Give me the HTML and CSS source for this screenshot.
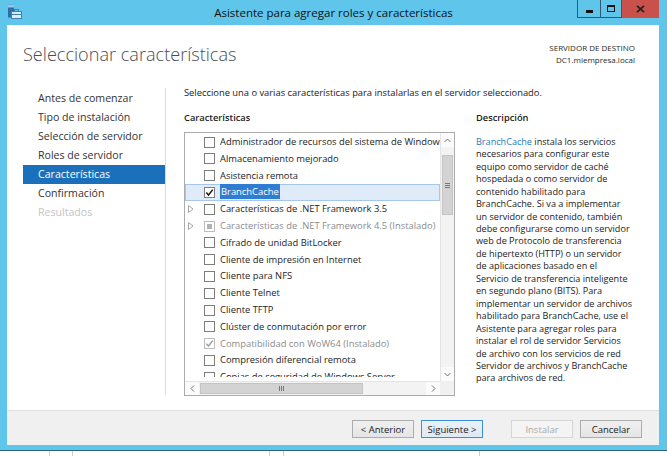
FILE: index.html
```html
<!DOCTYPE html>
<html lang="es">
<head>
<meta charset="utf-8">
<title>Asistente para agregar roles y características</title>
<link rel="stylesheet" href="styles.css">
</head>
<body>
<div class="window">
  <div class="titlebar">
    <div class="tb-left">
      <svg class="app-icon" width="16" height="16" viewBox="0 0 16 16">
        <rect x="1" y="0.5" width="6" height="13" fill="#2d6fa8"/>
        <rect x="1" y="0.5" width="6" height="3" fill="#8fc9ec"/>
        <rect x="4.5" y="7.5" width="10" height="7" fill="#d9eef9" stroke="#3f7fb3" stroke-width="1"/>
        <rect x="7.5" y="5.5" width="4" height="2" fill="none" stroke="#3f7fb3" stroke-width="1"/>
        <rect x="5" y="10" width="9" height="1" fill="#3f7fb3"/>
      </svg>
    </div>
    <div class="title">Asistente para agregar roles y características</div>
    <div class="controls">
      <div class="ctl ctl-min"><span class="min-glyph"></span></div>
      <div class="ctl ctl-max"><span class="max-glyph"></span></div>
      <div class="ctl ctl-close">
        <svg width="9" height="8" viewBox="0 0 9 8"><path d="M1 0.8 L8 7.2 M8 0.8 L1 7.2" stroke="#222" stroke-width="1.8" fill="none"/></svg>
      </div>
    </div>
  </div>

  <div class="client">
    <div class="header">
      <h1>Seleccionar características</h1>
      <div class="dest">
        <div>SERVIDOR DE DESTINO</div>
        <div>DC1.miempresa.local</div>
      </div>
    </div>

    <div class="main">
      <nav class="steps">
        <div class="step">Antes de comenzar</div>
        <div class="step">Tipo de instalación</div>
        <div class="step">Selección de servidor</div>
        <div class="step">Roles de servidor</div>
        <div class="step active">Características</div>
        <div class="step">Confirmación</div>
        <div class="step disabled">Resultados</div>
      </nav>

      <div class="content">
        <p class="intro">Seleccione una o varias características para instalarlas en el servidor seleccionado.</p>
        <div class="columns">
          <div class="features">
            <div class="label">Características</div>
            <div class="listbox">
              <div class="rows">
                <div class="row"><span class="exp"></span><span class="cb"></span><span class="txt">Administrador de recursos del sistema de Windows</span></div>
                <div class="row"><span class="exp"></span><span class="cb"></span><span class="txt">Almacenamiento mejorado</span></div>
                <div class="row"><span class="exp"></span><span class="cb"></span><span class="txt">Asistencia remota</span></div>
                <div class="row selected"><span class="exp"></span><span class="cb"><svg width="9" height="9" viewBox="0 0 9 9"><polyline points="1.3,4.6 3.5,7 7.8,1.6" fill="none" stroke="#1a1a1a" stroke-width="1.5"/></svg></span><span class="txt"><span class="hl">BranchCache</span></span></div>
                <div class="row"><span class="exp"><svg width="6" height="8" viewBox="0 0 6 8"><polygon points="0.5,0.5 5,4 0.5,7.5" fill="none" stroke="#a6a6a6" stroke-width="1"/></svg></span><span class="cb"></span><span class="txt">Características de .NET Framework 3.5</span></div>
                <div class="row installed"><span class="exp"><svg width="6" height="8" viewBox="0 0 6 8"><polygon points="0.5,0.5 5,4 0.5,7.5" fill="none" stroke="#a6a6a6" stroke-width="1"/></svg></span><span class="cb partial"><span class="fill"></span></span><span class="txt">Características de .NET Framework 4.5 (Instalado)</span></div>
                <div class="row"><span class="exp"></span><span class="cb"></span><span class="txt">Cifrado de unidad BitLocker</span></div>
                <div class="row"><span class="exp"></span><span class="cb"></span><span class="txt">Cliente de impresión en Internet</span></div>
                <div class="row"><span class="exp"></span><span class="cb"></span><span class="txt">Cliente para NFS</span></div>
                <div class="row"><span class="exp"></span><span class="cb"></span><span class="txt">Cliente Telnet</span></div>
                <div class="row"><span class="exp"></span><span class="cb"></span><span class="txt">Cliente TFTP</span></div>
                <div class="row"><span class="exp"></span><span class="cb"></span><span class="txt">Clúster de conmutación por error</span></div>
                <div class="row installed"><span class="exp"></span><span class="cb"><svg width="9" height="9" viewBox="0 0 9 9"><polyline points="1.3,4.6 3.5,7 7.8,1.6" fill="none" stroke="#9a9a9a" stroke-width="1.4"/></svg></span><span class="txt">Compatibilidad con WoW64 (Instalado)</span></div>
                <div class="row"><span class="exp"></span><span class="cb"></span><span class="txt">Compresión diferencial remota</span></div>
                <div class="row"><span class="exp"></span><span class="cb"></span><span class="txt">Copias de seguridad de Windows Server</span></div>
              </div>
              <div class="vscroll">
                <div class="sbtn"><svg width="7" height="5" viewBox="0 0 7 5"><polyline points="0.5,4 3.5,1 6.5,4" fill="none" stroke="#707070" stroke-width="1"/></svg></div>
                <div class="vgap"></div>
                <div class="vthumb"><span class="grip-h"></span><span class="grip-h"></span><span class="grip-h"></span></div>
                <div class="vtrack"></div>
                <div class="sbtn"><svg width="7" height="5" viewBox="0 0 7 5"><polyline points="0.5,1 3.5,4 6.5,1" fill="none" stroke="#707070" stroke-width="1"/></svg></div>
              </div>
              <div class="hscroll">
                <div class="sbtn"><svg width="5" height="7" viewBox="0 0 5 7"><polyline points="4,0.5 1,3.5 4,6.5" fill="none" stroke="#707070" stroke-width="1"/></svg></div>
                <div class="hthumb"><span class="grip-v"></span><span class="grip-v"></span><span class="grip-v"></span></div>
                <div class="htrack"></div>
                <div class="sbtn"><svg width="5" height="7" viewBox="0 0 5 7"><polyline points="1,0.5 4,3.5 1,6.5" fill="none" stroke="#707070" stroke-width="1"/></svg></div>
              </div>
              <div class="corner"></div>
            </div>
          </div>

          <div class="desc">
            <div class="label">Descripción</div>
            <p class="desc-text"><span class="link">BranchCache</span> instala los servicios<br>necesarios para configurar este<br>equipo como servidor de caché<br>hospedada o como servidor de<br>contenido habilitado para<br>BranchCache. Si va a implementar<br>un servidor de contenido, también<br>debe configurarse como un servidor<br>web de Protocolo de transferencia<br>de hipertexto (HTTP) o un servidor<br>de aplicaciones basado en el<br>Servicio de transferencia inteligente<br>en segundo plano (BITS). Para<br>implementar un servidor de archivos<br>habilitado para BranchCache, use el<br>Asistente para agregar roles para<br>instalar el rol de servidor Servicios<br>de archivo con los servicios de red<br>Servidor de archivos y BranchCache<br>para archivos de red.</p>
          </div>
        </div>
      </div>
    </div>

    <div class="footer">
      <button class="btn">&lt; Anterior</button>
      <button class="btn primary">Siguiente &gt;</button>
      <button class="btn disabled gap-left">Instalar</button>
      <button class="btn">Cancelar</button>
    </div>
  </div>
</div>
<div class="backdrop">
  <div class="seg s1"></div><div class="seg s2"></div><div class="seg s3"></div><div class="seg s4"></div><div class="seg s5"></div><div class="seg s6"></div>
</div>
</body>
</html>
```

FILE: styles.css
```css
* { box-sizing: border-box; }
html, body { margin: 0; padding: 0; }
body {
  width: 667px;
  height: 456px;
  overflow: hidden;
  background: #ffffff;
  font-family: "Open Sans", "Noto Sans", "Liberation Sans", sans-serif;
  color: #1e1e1e;
}

.window {
  height: 451px;
  background: #5fc5ea;
  border-bottom: 1px solid #2f6580;
  padding-bottom: 5px;
  display: flex;
  flex-direction: column;
}

/* title bar */
.titlebar {
  height: 25px;
  display: grid;
  grid-template-columns: 1fr auto 1fr;
  align-items: start;
}
.tb-left { padding: 4px 0 0 7px; }
.app-icon { display: block; }
.title {
  font-size: 11.5px;
  line-height: 25px;
  color: #111;
  white-space: nowrap;
}
.controls {
  display: flex;
  justify-content: flex-end;
  padding-right: 8px;
}
.ctl {
  height: 18px;
  display: flex;
  align-items: center;
  justify-content: center;
}
.ctl-min {
  width: 23px;
  border: 1px solid #2e5a72;
  border-top: none;
  border-right: none;
}
.ctl-max {
  width: 22px;
  border: 1px solid #2e5a72;
  border-top: none;
}
.ctl-close {
  width: 37px;
  background: #c8514b;
}
.min-glyph {
  display: block;
  width: 7px;
  height: 3px;
  background: #111;
  margin-top: 5px;
}
.max-glyph {
  display: block;
  width: 8px;
  height: 7px;
  border: 1px solid #111;
  border-top-width: 2px;
}

/* client area */
.client {
  flex: 1;
  margin: 0 8px 0 7px;
  background: #ffffff;
  display: flex;
  flex-direction: column;
}

.header {
  height: 61px;
  display: flex;
  justify-content: space-between;
  align-items: flex-start;
  padding: 17px 24px 0 16px;
}
.header h1 {
  margin: 0;
  font-size: 18.1px;
  font-weight: 300;
  line-height: 25px;
  color: #4a4d55;
}
.dest {
  text-align: right;
  font-size: 8px;
  line-height: 12px;
  color: #2a2a2a;
}

.main {
  flex: 1;
  display: flex;
}

.steps {
  margin: 2px 0 0 16px;
  width: 143px;
  height: 307px;
  border-right: 1px solid #dcdcdc;
  padding-top: 1px;
}
.step {
  height: 19px;
  line-height: 19px;
  padding-left: 15px;
  font-size: 10.6px;
  color: #333;
  white-space: nowrap;
}
.step.active {
  background: #1a70bb;
  color: #fff;
}
.step.disabled { color: #c4c4c4; }

.content {
  margin-left: 18px;
  flex: 1;
}
.intro {
  margin: 0;
  font-size: 9.35px;
  line-height: 14px;
  color: #222;
  white-space: nowrap;
}
.columns {
  display: flex;
  margin-top: 11px;
  gap: 21px;
}
.label {
  font-size: 9.3px;
  font-weight: 600;
  line-height: 14px;
  color: #222;
}
.features { width: 271px; }

.listbox {
  margin-top: 7px;
  height: 264px;
  border: 1px solid #acacac;
  background: #fff;
  display: grid;
  grid-template-columns: 255px 14px;
  grid-template-rows: 248px 14px;
}
.rows {
  height: 244px;
  align-self: start;
  overflow: hidden;
  padding-top: 0.7px;
}
.row {
  height: 16.8px;
  display: flex;
  align-items: center;
  font-size: 9.4px;
  color: #1e1e1e;
  white-space: nowrap;
  border: 1px solid transparent;
}
.row.selected {
  background: #dfebf9;
  border-color: #a6c6ea;
}
.exp {
  width: 18px;
  flex: none;
  padding-left: 2px;
  display: flex;
  align-items: center;
}
.exp svg { display: block; }
.cb {
  width: 11px;
  height: 11px;
  flex: none;
  border: 1px solid #7d7d7d;
  background: #fff;
  display: flex;
  align-items: center;
  justify-content: center;
}
.cb svg { display: block; }
.txt {
  margin-left: 5px;
  line-height: 14px;
}
.hl {
  background: #2f7dd3;
  color: #fff;
  padding: 1px 1px;
}
.row.installed { color: #8c8c8c; }
.row.installed .cb { border-color: #bdbdbd; }
.cb.partial .fill {
  display: block;
  width: 5px;
  height: 5px;
  background: #b3b3b3;
}

.vscroll {
  background: #f3f3f3;
  border-left: 1px solid #e4e4e4;
  display: flex;
  flex-direction: column;
}
.sbtn {
  width: 13px;
  height: 14px;
  flex: none;
  display: flex;
  align-items: center;
  justify-content: center;
  background: #fbfbfb;
}
.hscroll .sbtn { width: 14px; height: 13px; }
.sbtn svg { display: block; }
.vgap { height: 8px; flex: none; }
.vthumb {
  height: 60px;
  flex: none;
  margin: 0 1px;
  background: #d3d3d3;
  border: 1px solid #c4c4c4;
  display: flex;
  flex-direction: column;
  align-items: center;
  justify-content: center;
  gap: 1px;
}
.grip-h { display: block; width: 5px; height: 1px; background: #777; }
.vtrack { flex: 1; }

.hscroll {
  background: #f3f3f3;
  border-top: 1px solid #e4e4e4;
  display: flex;
}
.hthumb {
  width: 163px;
  flex: none;
  margin: 1px 0 1px 1px;
  background: #d3d3d3;
  border: 1px solid #c4c4c4;
  display: flex;
  align-items: center;
  justify-content: center;
  gap: 1px;
}
.grip-v { display: block; width: 1px; height: 5px; background: #777; }
.htrack { flex: 1; }
.corner { background: #f0f0f0; }

.desc { width: 170px; }
.desc-text {
  margin: 10.8px 0 0;
  font-size: 9.1px;
  line-height: 12.45px;
  color: #222;
  white-space: nowrap;
}
.link { color: #1b7bbd; }

/* footer */
.footer {
  height: 35px;
  border-top: 1px solid #dfdfdf;
  background: #f0f0f0;
  display: flex;
  justify-content: flex-end;
  align-items: flex-start;
  padding: 9px 17px 0 0;
  gap: 7px;
}
.btn {
  width: 62px;
  height: 18px;
  padding: 0;
  font-family: inherit;
  font-size: 9.5px;
  color: #1a1a1a;
  border: 1px solid #acacac;
  background: linear-gradient(#f0f0f0, #e5e5e5);
  border-radius: 0;
}
.btn.primary {
  border-color: #3c8fd6;
  background: linear-gradient(#eaf2fa, #dde9f5);
}
.btn.disabled {
  border-color: #d6d6d6;
  background: #f4f4f4;
  color: #a8a8a8;
}
.btn.gap-left { margin-left: 21px; }

/* desktop behind the window */
.backdrop {
  height: 5px;
  display: flex;
  background: #fff;
}
.seg { border-right: 1px solid #cfcfcf; height: 5px; }
.s1 { width: 50px; }
.s2 { width: 23px; }
.s3 { width: 197px; }
.s4 { width: 14px; }
.s5 { width: 196px; }
.s6 { flex: 1; border-right: none; }
```
